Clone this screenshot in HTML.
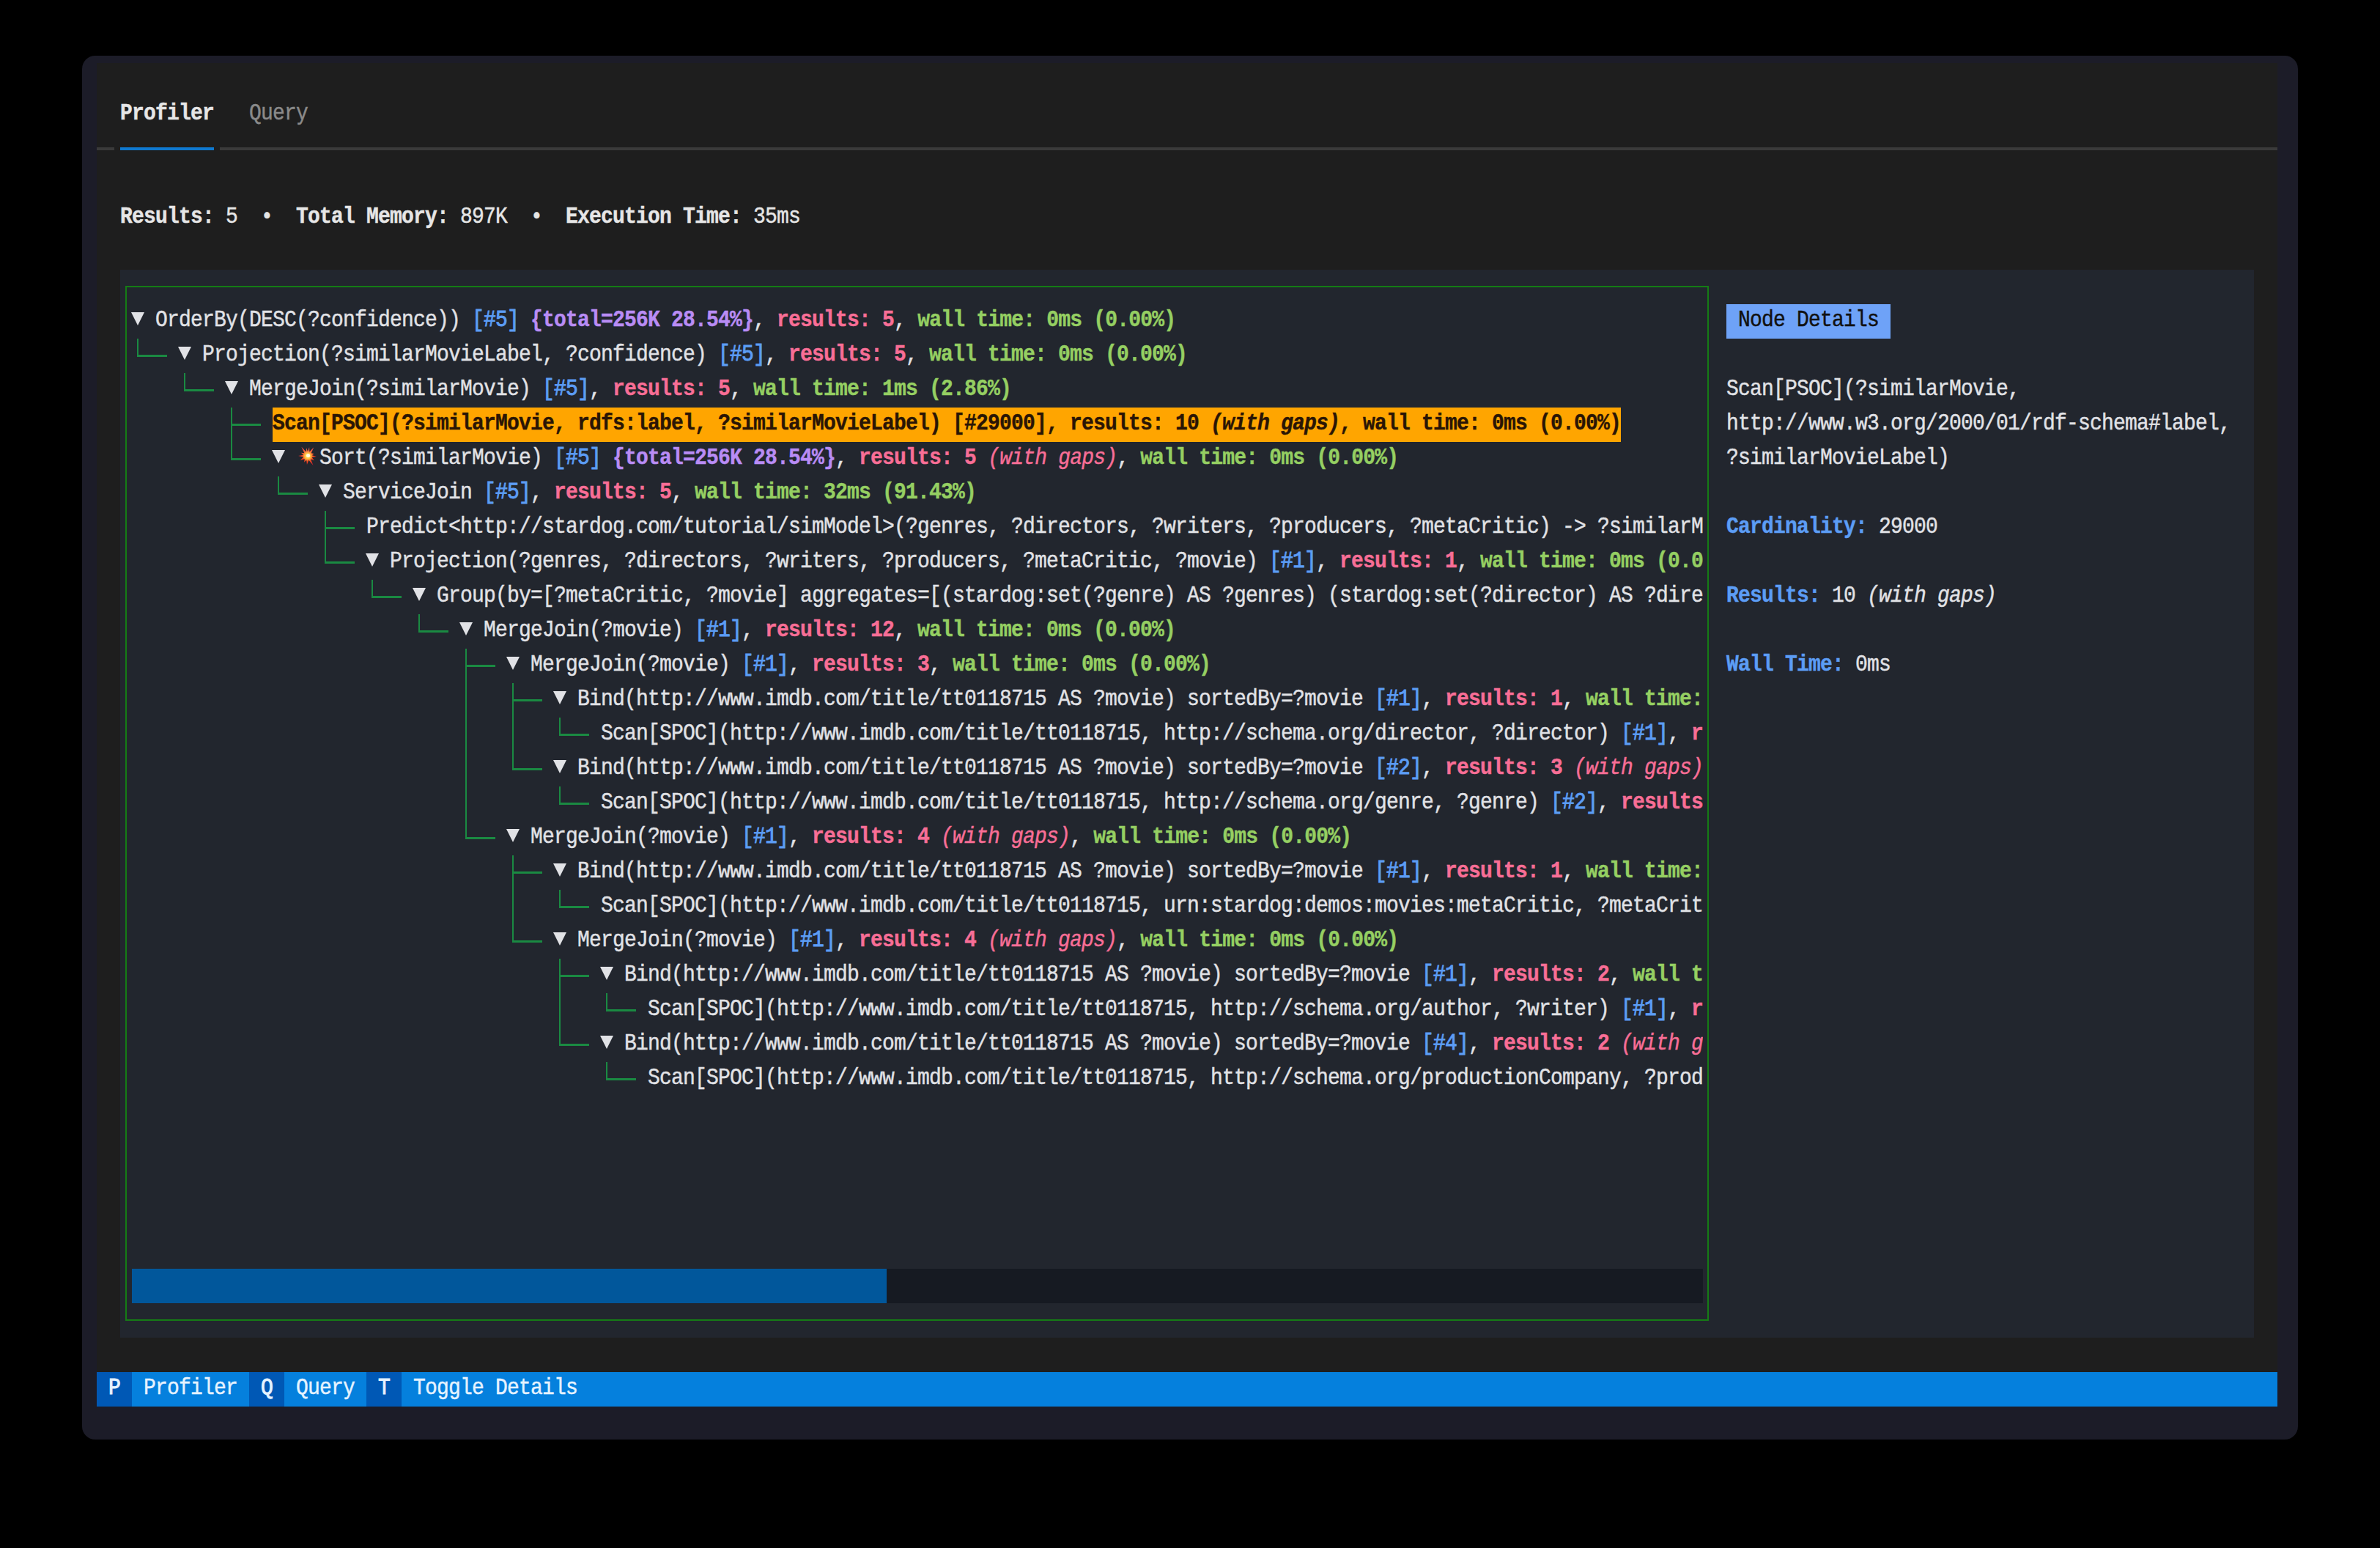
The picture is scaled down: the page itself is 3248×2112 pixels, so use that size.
<!DOCTYPE html>
<html><head><meta charset="utf-8"><title>Profiler</title><style>
html,body{margin:0;padding:0;background:#000000;}
body{width:3248px;height:2112px;position:relative;overflow:hidden;}
.t{position:absolute;height:47.0px;line-height:47.0px;white-space:pre;font-family:"Liberation Mono",monospace;font-size:28.0px;letter-spacing:-0.8027px;color:#e1e2e6;transform:scaleY(1.12);transform-origin:0 30.95px;-webkit-text-stroke:0.4px currentColor;}
.w{color:#e1e2e6;}
.b{color:#5c9df5;-webkit-text-stroke:0.8px currentColor;}
.p{color:#b98cf5;font-weight:bold;}
.r{color:#f86e96;font-weight:bold;}
.ri{color:#f86e96;font-style:italic;}
.g{color:#95cf62;font-weight:bold;}
.h{color:#2a1505;font-weight:bold;}
.hi{color:#2a1505;font-weight:bold;font-style:italic;}
.tabA{color:#e6e6e6;font-weight:bold;}
.tabI{color:#8a8a8a;}
.sb{color:#e6e6e6;font-weight:bold;}
.sw{color:#e6e6e6;}
.nd{color:#111111;}
.dw{color:#e1e2e6;}
.dwi{color:#e1e2e6;font-style:italic;}
.db{color:#5c9df5;font-weight:bold;}
.fk{color:#e6f3ff;-webkit-text-stroke:0.9px currentColor;}
.ft{color:#e6f3ff;}
</style></head><body>
<div style="position:absolute;left:112.00px;top:76.00px;width:3024.00px;height:1888.00px;background:#1c1c28;border-radius:18px;"></div>
<div style="position:absolute;left:132.00px;top:86.00px;width:2976.00px;height:1833.00px;background:#1e1e1e;"></div>
<div class="t" style="left:164.00px;top:132.00px;"><span class="tabA">Profiler</span></div>
<div class="t" style="left:340.00px;top:132.00px;"><span class="tabI">Query</span></div>
<div style="position:absolute;left:132.00px;top:201.00px;width:24.00px;height:4.00px;background:#3a3a3a;"></div>
<div style="position:absolute;left:164.00px;top:201.00px;width:128.00px;height:4.00px;background:#0f79d0;"></div>
<div style="position:absolute;left:300.00px;top:201.00px;width:2808.00px;height:4.00px;background:#3a3a3a;"></div>
<div class="t" style="left:164.00px;top:273.00px;"><span class="sb">Results:</span><span class="sw"> 5  •  </span><span class="sb">Total Memory:</span><span class="sw"> 897K  •  </span><span class="sb">Execution Time:</span><span class="sw"> 35ms</span></div>
<div style="position:absolute;left:164.00px;top:368.00px;width:2912.00px;height:1457.00px;background:#22262e;"></div>
<div style="position:absolute;left:170.75px;top:390.25px;width:2157.50px;height:1407.50px;border:2.5px solid #157c15;"></div>
<div style="position:absolute;left:186.70px;top:462.00px;width:2.60px;height:24.75px;background:#1a8a42;"></div>
<div style="position:absolute;left:186.70px;top:484.25px;width:41.30px;height:2.50px;background:#1a8a42;"></div>
<div style="position:absolute;left:250.70px;top:509.00px;width:2.60px;height:24.75px;background:#1a8a42;"></div>
<div style="position:absolute;left:250.70px;top:531.25px;width:41.30px;height:2.50px;background:#1a8a42;"></div>
<div style="position:absolute;left:314.70px;top:556.00px;width:2.60px;height:47.00px;background:#1a8a42;"></div>
<div style="position:absolute;left:314.70px;top:578.25px;width:41.30px;height:2.50px;background:#1a8a42;"></div>
<div style="position:absolute;left:314.70px;top:603.00px;width:2.60px;height:24.75px;background:#1a8a42;"></div>
<div style="position:absolute;left:314.70px;top:625.25px;width:41.30px;height:2.50px;background:#1a8a42;"></div>
<div style="position:absolute;left:378.70px;top:650.00px;width:2.60px;height:24.75px;background:#1a8a42;"></div>
<div style="position:absolute;left:378.70px;top:672.25px;width:41.30px;height:2.50px;background:#1a8a42;"></div>
<div style="position:absolute;left:442.70px;top:697.00px;width:2.60px;height:47.00px;background:#1a8a42;"></div>
<div style="position:absolute;left:442.70px;top:719.25px;width:41.30px;height:2.50px;background:#1a8a42;"></div>
<div style="position:absolute;left:442.70px;top:744.00px;width:2.60px;height:24.75px;background:#1a8a42;"></div>
<div style="position:absolute;left:442.70px;top:766.25px;width:41.30px;height:2.50px;background:#1a8a42;"></div>
<div style="position:absolute;left:506.70px;top:791.00px;width:2.60px;height:24.75px;background:#1a8a42;"></div>
<div style="position:absolute;left:506.70px;top:813.25px;width:41.30px;height:2.50px;background:#1a8a42;"></div>
<div style="position:absolute;left:570.70px;top:838.00px;width:2.60px;height:24.75px;background:#1a8a42;"></div>
<div style="position:absolute;left:570.70px;top:860.25px;width:41.30px;height:2.50px;background:#1a8a42;"></div>
<div style="position:absolute;left:634.70px;top:885.00px;width:2.60px;height:47.00px;background:#1a8a42;"></div>
<div style="position:absolute;left:634.70px;top:907.25px;width:41.30px;height:2.50px;background:#1a8a42;"></div>
<div style="position:absolute;left:634.70px;top:932.00px;width:2.60px;height:47.00px;background:#1a8a42;"></div>
<div style="position:absolute;left:698.70px;top:932.00px;width:2.60px;height:47.00px;background:#1a8a42;"></div>
<div style="position:absolute;left:698.70px;top:954.25px;width:41.30px;height:2.50px;background:#1a8a42;"></div>
<div style="position:absolute;left:634.70px;top:979.00px;width:2.60px;height:47.00px;background:#1a8a42;"></div>
<div style="position:absolute;left:698.70px;top:979.00px;width:2.60px;height:47.00px;background:#1a8a42;"></div>
<div style="position:absolute;left:762.70px;top:979.00px;width:2.60px;height:24.75px;background:#1a8a42;"></div>
<div style="position:absolute;left:762.70px;top:1001.25px;width:41.30px;height:2.50px;background:#1a8a42;"></div>
<div style="position:absolute;left:634.70px;top:1026.00px;width:2.60px;height:47.00px;background:#1a8a42;"></div>
<div style="position:absolute;left:698.70px;top:1026.00px;width:2.60px;height:24.75px;background:#1a8a42;"></div>
<div style="position:absolute;left:698.70px;top:1048.25px;width:41.30px;height:2.50px;background:#1a8a42;"></div>
<div style="position:absolute;left:634.70px;top:1073.00px;width:2.60px;height:47.00px;background:#1a8a42;"></div>
<div style="position:absolute;left:762.70px;top:1073.00px;width:2.60px;height:24.75px;background:#1a8a42;"></div>
<div style="position:absolute;left:762.70px;top:1095.25px;width:41.30px;height:2.50px;background:#1a8a42;"></div>
<div style="position:absolute;left:634.70px;top:1120.00px;width:2.60px;height:24.75px;background:#1a8a42;"></div>
<div style="position:absolute;left:634.70px;top:1142.25px;width:41.30px;height:2.50px;background:#1a8a42;"></div>
<div style="position:absolute;left:698.70px;top:1167.00px;width:2.60px;height:47.00px;background:#1a8a42;"></div>
<div style="position:absolute;left:698.70px;top:1189.25px;width:41.30px;height:2.50px;background:#1a8a42;"></div>
<div style="position:absolute;left:698.70px;top:1214.00px;width:2.60px;height:47.00px;background:#1a8a42;"></div>
<div style="position:absolute;left:762.70px;top:1214.00px;width:2.60px;height:24.75px;background:#1a8a42;"></div>
<div style="position:absolute;left:762.70px;top:1236.25px;width:41.30px;height:2.50px;background:#1a8a42;"></div>
<div style="position:absolute;left:698.70px;top:1261.00px;width:2.60px;height:24.75px;background:#1a8a42;"></div>
<div style="position:absolute;left:698.70px;top:1283.25px;width:41.30px;height:2.50px;background:#1a8a42;"></div>
<div style="position:absolute;left:762.70px;top:1308.00px;width:2.60px;height:47.00px;background:#1a8a42;"></div>
<div style="position:absolute;left:762.70px;top:1330.25px;width:41.30px;height:2.50px;background:#1a8a42;"></div>
<div style="position:absolute;left:762.70px;top:1355.00px;width:2.60px;height:47.00px;background:#1a8a42;"></div>
<div style="position:absolute;left:826.70px;top:1355.00px;width:2.60px;height:24.75px;background:#1a8a42;"></div>
<div style="position:absolute;left:826.70px;top:1377.25px;width:41.30px;height:2.50px;background:#1a8a42;"></div>
<div style="position:absolute;left:762.70px;top:1402.00px;width:2.60px;height:24.75px;background:#1a8a42;"></div>
<div style="position:absolute;left:762.70px;top:1424.25px;width:41.30px;height:2.50px;background:#1a8a42;"></div>
<div style="position:absolute;left:826.70px;top:1449.00px;width:2.60px;height:24.75px;background:#1a8a42;"></div>
<div style="position:absolute;left:826.70px;top:1471.25px;width:41.30px;height:2.50px;background:#1a8a42;"></div>
<div style="position:absolute;left:179.00px;top:426.00px;width:0;height:0;border-left:9px solid transparent;border-right:9px solid transparent;border-top:18px solid #e1e2e6;"></div>
<div class="t" style="left:212.00px;top:414.00px;width:2112.00px;overflow:hidden;"><span class="w">OrderBy(DESC(?confidence))</span><span class="w"> </span><span class="b">[#5]</span><span class="w"> </span><span class="p">{total=256K 28.54%}</span><span class="w">, </span><span class="r">results: 5</span><span class="w">, </span><span class="g">wall time: 0ms (0.00%)</span></div>
<div style="position:absolute;left:243.00px;top:473.00px;width:0;height:0;border-left:9px solid transparent;border-right:9px solid transparent;border-top:18px solid #e1e2e6;"></div>
<div class="t" style="left:276.00px;top:461.00px;width:2048.00px;overflow:hidden;"><span class="w">Projection(?similarMovieLabel, ?confidence)</span><span class="w"> </span><span class="b">[#5]</span><span class="w">, </span><span class="r">results: 5</span><span class="w">, </span><span class="g">wall time: 0ms (0.00%)</span></div>
<div style="position:absolute;left:307.00px;top:520.00px;width:0;height:0;border-left:9px solid transparent;border-right:9px solid transparent;border-top:18px solid #e1e2e6;"></div>
<div class="t" style="left:340.00px;top:508.00px;width:1984.00px;overflow:hidden;"><span class="w">MergeJoin(?similarMovie)</span><span class="w"> </span><span class="b">[#5]</span><span class="w">, </span><span class="r">results: 5</span><span class="w">, </span><span class="g">wall time: 1ms (2.86%)</span></div>
<div style="position:absolute;left:371.00px;top:614.00px;width:0;height:0;border-left:9px solid transparent;border-right:9px solid transparent;border-top:18px solid #e1e2e6;"></div>
<div class="t" style="left:436.00px;top:602.00px;width:1888.00px;overflow:hidden;"><span class="w">Sort(?similarMovie)</span><span class="w"> </span><span class="b">[#5]</span><span class="w"> </span><span class="p">{total=256K 28.54%}</span><span class="w">, </span><span class="r">results: 5</span><span class="r"> </span><span class="ri">(with gaps)</span><span class="w">, </span><span class="g">wall time: 0ms (0.00%)</span></div>
<div style="position:absolute;left:435.00px;top:661.00px;width:0;height:0;border-left:9px solid transparent;border-right:9px solid transparent;border-top:18px solid #e1e2e6;"></div>
<div class="t" style="left:468.00px;top:649.00px;width:1856.00px;overflow:hidden;"><span class="w">ServiceJoin</span><span class="w"> </span><span class="b">[#5]</span><span class="w">, </span><span class="r">results: 5</span><span class="w">, </span><span class="g">wall time: 32ms (91.43%)</span></div>
<div class="t" style="left:500.00px;top:696.00px;width:1824.00px;overflow:hidden;"><span class="w">Predict&lt;http://stardog.com/tutorial/simModel&gt;(?genres, ?directors, ?writers, ?producers, ?metaCritic) -&gt; ?similarMovie</span></div>
<div style="position:absolute;left:499.00px;top:755.00px;width:0;height:0;border-left:9px solid transparent;border-right:9px solid transparent;border-top:18px solid #e1e2e6;"></div>
<div class="t" style="left:532.00px;top:743.00px;width:1792.00px;overflow:hidden;"><span class="w">Projection(?genres, ?directors, ?writers, ?producers, ?metaCritic, ?movie)</span><span class="w"> </span><span class="b">[#1]</span><span class="w">, </span><span class="r">results: 1</span><span class="w">, </span><span class="g">wall time: 0ms (0.00%)</span></div>
<div style="position:absolute;left:563.00px;top:802.00px;width:0;height:0;border-left:9px solid transparent;border-right:9px solid transparent;border-top:18px solid #e1e2e6;"></div>
<div class="t" style="left:596.00px;top:790.00px;width:1728.00px;overflow:hidden;"><span class="w">Group(by=[?metaCritic, ?movie] aggregates=[(stardog:set(?genre) AS ?genres) (stardog:set(?director) AS ?directors)</span></div>
<div style="position:absolute;left:627.00px;top:849.00px;width:0;height:0;border-left:9px solid transparent;border-right:9px solid transparent;border-top:18px solid #e1e2e6;"></div>
<div class="t" style="left:660.00px;top:837.00px;width:1664.00px;overflow:hidden;"><span class="w">MergeJoin(?movie)</span><span class="w"> </span><span class="b">[#1]</span><span class="w">, </span><span class="r">results: 12</span><span class="w">, </span><span class="g">wall time: 0ms (0.00%)</span></div>
<div style="position:absolute;left:691.00px;top:896.00px;width:0;height:0;border-left:9px solid transparent;border-right:9px solid transparent;border-top:18px solid #e1e2e6;"></div>
<div class="t" style="left:724.00px;top:884.00px;width:1600.00px;overflow:hidden;"><span class="w">MergeJoin(?movie)</span><span class="w"> </span><span class="b">[#1]</span><span class="w">, </span><span class="r">results: 3</span><span class="w">, </span><span class="g">wall time: 0ms (0.00%)</span></div>
<div style="position:absolute;left:755.00px;top:943.00px;width:0;height:0;border-left:9px solid transparent;border-right:9px solid transparent;border-top:18px solid #e1e2e6;"></div>
<div class="t" style="left:788.00px;top:931.00px;width:1536.00px;overflow:hidden;"><span class="w">Bind(http://www.imdb.com/title/tt0118715 AS ?movie) sortedBy=?movie</span><span class="w"> </span><span class="b">[#1]</span><span class="w">, </span><span class="r">results: 1</span><span class="w">, </span><span class="g">wall time: 0ms (0.00%)</span></div>
<div class="t" style="left:820.00px;top:978.00px;width:1504.00px;overflow:hidden;"><span class="w">Scan[SPOC](http://www.imdb.com/title/tt0118715, http://schema.org/director, ?director)</span><span class="w"> </span><span class="b">[#1]</span><span class="w">, </span><span class="r">results: 1</span><span class="w">, </span><span class="g">wall time: 0ms (0.00%)</span></div>
<div style="position:absolute;left:755.00px;top:1037.00px;width:0;height:0;border-left:9px solid transparent;border-right:9px solid transparent;border-top:18px solid #e1e2e6;"></div>
<div class="t" style="left:788.00px;top:1025.00px;width:1536.00px;overflow:hidden;"><span class="w">Bind(http://www.imdb.com/title/tt0118715 AS ?movie) sortedBy=?movie</span><span class="w"> </span><span class="b">[#2]</span><span class="w">, </span><span class="r">results: 3</span><span class="r"> </span><span class="ri">(with gaps)</span><span class="w">, </span><span class="g">wall time: 0ms (0.00%)</span></div>
<div class="t" style="left:820.00px;top:1072.00px;width:1504.00px;overflow:hidden;"><span class="w">Scan[SPOC](http://www.imdb.com/title/tt0118715, http://schema.org/genre, ?genre)</span><span class="w"> </span><span class="b">[#2]</span><span class="w">, </span><span class="r">results: 3</span><span class="r"> </span><span class="ri">(with gaps)</span><span class="w">, </span><span class="g">wall time: 0ms (0.00%)</span></div>
<div style="position:absolute;left:691.00px;top:1131.00px;width:0;height:0;border-left:9px solid transparent;border-right:9px solid transparent;border-top:18px solid #e1e2e6;"></div>
<div class="t" style="left:724.00px;top:1119.00px;width:1600.00px;overflow:hidden;"><span class="w">MergeJoin(?movie)</span><span class="w"> </span><span class="b">[#1]</span><span class="w">, </span><span class="r">results: 4</span><span class="r"> </span><span class="ri">(with gaps)</span><span class="w">, </span><span class="g">wall time: 0ms (0.00%)</span></div>
<div style="position:absolute;left:755.00px;top:1178.00px;width:0;height:0;border-left:9px solid transparent;border-right:9px solid transparent;border-top:18px solid #e1e2e6;"></div>
<div class="t" style="left:788.00px;top:1166.00px;width:1536.00px;overflow:hidden;"><span class="w">Bind(http://www.imdb.com/title/tt0118715 AS ?movie) sortedBy=?movie</span><span class="w"> </span><span class="b">[#1]</span><span class="w">, </span><span class="r">results: 1</span><span class="w">, </span><span class="g">wall time: 0ms (0.00%)</span></div>
<div class="t" style="left:820.00px;top:1213.00px;width:1504.00px;overflow:hidden;"><span class="w">Scan[SPOC](http://www.imdb.com/title/tt0118715, urn:stardog:demos:movies:metaCritic, ?metaCritic)</span><span class="w"> </span><span class="b">[#1]</span><span class="w">, </span><span class="r">results: 1</span><span class="w">, </span><span class="g">wall time: 0ms (0.00%)</span></div>
<div style="position:absolute;left:755.00px;top:1272.00px;width:0;height:0;border-left:9px solid transparent;border-right:9px solid transparent;border-top:18px solid #e1e2e6;"></div>
<div class="t" style="left:788.00px;top:1260.00px;width:1536.00px;overflow:hidden;"><span class="w">MergeJoin(?movie)</span><span class="w"> </span><span class="b">[#1]</span><span class="w">, </span><span class="r">results: 4</span><span class="r"> </span><span class="ri">(with gaps)</span><span class="w">, </span><span class="g">wall time: 0ms (0.00%)</span></div>
<div style="position:absolute;left:819.00px;top:1319.00px;width:0;height:0;border-left:9px solid transparent;border-right:9px solid transparent;border-top:18px solid #e1e2e6;"></div>
<div class="t" style="left:852.00px;top:1307.00px;width:1472.00px;overflow:hidden;"><span class="w">Bind(http://www.imdb.com/title/tt0118715 AS ?movie) sortedBy=?movie</span><span class="w"> </span><span class="b">[#1]</span><span class="w">, </span><span class="r">results: 2</span><span class="w">, </span><span class="g">wall time: 0ms (0.00%)</span></div>
<div class="t" style="left:884.00px;top:1354.00px;width:1440.00px;overflow:hidden;"><span class="w">Scan[SPOC](http://www.imdb.com/title/tt0118715, http://schema.org/author, ?writer)</span><span class="w"> </span><span class="b">[#1]</span><span class="w">, </span><span class="r">results: 2</span><span class="w">, </span><span class="g">wall time: 0ms (0.00%)</span></div>
<div style="position:absolute;left:819.00px;top:1413.00px;width:0;height:0;border-left:9px solid transparent;border-right:9px solid transparent;border-top:18px solid #e1e2e6;"></div>
<div class="t" style="left:852.00px;top:1401.00px;width:1472.00px;overflow:hidden;"><span class="w">Bind(http://www.imdb.com/title/tt0118715 AS ?movie) sortedBy=?movie</span><span class="w"> </span><span class="b">[#4]</span><span class="w">, </span><span class="r">results: 2</span><span class="r"> </span><span class="ri">(with gaps)</span><span class="w">, </span><span class="g">wall time: 0ms (0.00%)</span></div>
<div class="t" style="left:884.00px;top:1448.00px;width:1440.00px;overflow:hidden;"><span class="w">Scan[SPOC](http://www.imdb.com/title/tt0118715, http://schema.org/productionCompany, ?producer)</span><span class="w"> </span><span class="b">[#4]</span><span class="w">, </span><span class="r">results: 2</span><span class="r"> </span><span class="ri">(with gaps)</span><span class="w">, </span><span class="g">wall time: 0ms (0.00%)</span></div>
<div style="position:absolute;left:372.00px;top:556.00px;width:1840.00px;height:47.00px;background:#ffa500;"></div>
<div class="t" style="left:372.00px;top:555.00px;"><span class="h">Scan[PSOC](?similarMovie, rdfs:label, ?similarMovieLabel) [#29000], results: 10 </span><span class="hi">(with gaps)</span><span class="h">, wall time: 0ms (0.00%)</span></div>
<svg style="position:absolute;left:403.5px;top:605.5px" width="32" height="32" viewBox="-16 -16 32 32">
<defs><radialGradient id="bg1" cx="0" cy="0" r="15" gradientUnits="userSpaceOnUse"><stop offset="0" stop-color="#fff6c0"/><stop offset="0.25" stop-color="#ffc040"/><stop offset="0.5" stop-color="#f04a20"/><stop offset="1" stop-color="#d01030"/></radialGradient>
<linearGradient id="bg2" x1="0" y1="-15" x2="0" y2="15" gradientUnits="userSpaceOnUse"><stop offset="0" stop-color="#ffb090" stop-opacity="0.55"/><stop offset="0.5" stop-color="#ffb090" stop-opacity="0"/></linearGradient></defs>
<polygon fill="url(#bg1)" points="-9.06,-4.23 -4.60,-3.86 -8.60,-12.29 -2.30,-5.54 -1.91,-10.83 0.00,-6.00 2.08,-11.82 2.30,-5.54 8.03,-11.47 4.76,-3.65 8.46,-3.08 5.95,-0.78 11.95,1.05 5.64,2.05 9.01,6.31 4.05,4.42 7.50,12.99 1.30,5.86 -1.05,11.95 -1.80,5.72 -5.00,8.66 -4.24,4.24 -10.39,6.00 -5.80,1.55 -13.00,0.00 -5.86,-1.30"/>
<polygon fill="url(#bg2)" points="-9.06,-4.23 -4.60,-3.86 -8.60,-12.29 -2.30,-5.54 -1.91,-10.83 0.00,-6.00 2.08,-11.82 2.30,-5.54 8.03,-11.47 4.76,-3.65 8.46,-3.08 5.95,-0.78 11.95,1.05 5.64,2.05 9.01,6.31 4.05,4.42 7.50,12.99 1.30,5.86 -1.05,11.95 -1.80,5.72 -5.00,8.66 -4.24,4.24 -10.39,6.00 -5.80,1.55 -13.00,0.00 -5.86,-1.30"/>
<polygon fill="#ffd040" points="-3.63,-1.69 -1.84,-1.54 -3.44,-4.91 -0.92,-2.22 -0.76,-4.33 0.00,-2.40 0.83,-4.73 0.92,-2.22 3.21,-4.59 1.90,-1.46 3.38,-1.23 2.38,-0.31 4.78,0.42 2.26,0.82 3.60,2.52 1.62,1.77 3.00,5.20 0.52,2.34 -0.42,4.78 -0.72,2.29 -2.00,3.46 -1.70,1.70 -4.16,2.40 -2.32,0.62 -5.20,0.00 -2.34,-0.52"/>
<circle cx="0.5" cy="-0.5" r="2.6" fill="#fffbe0"/></svg>
<div style="position:absolute;left:180.00px;top:1731.00px;width:1030.00px;height:47.00px;background:#01579b;"></div>
<div style="position:absolute;left:1210.00px;top:1731.00px;width:1114.00px;height:47.00px;background:#161a22;"></div>
<div style="position:absolute;left:2356.00px;top:415.00px;width:224.00px;height:47.00px;background:#6ea2f7;"></div>
<div class="t" style="left:2372.00px;top:414.00px;"><span class="nd">Node Details</span></div>
<div class="t" style="left:2356.00px;top:508.00px;"><span class="dw">Scan[PSOC](?similarMovie,</span></div>
<div class="t" style="left:2356.00px;top:555.00px;"><span class="dw">http://www.w3.org/2000/01/rdf-schema#label,</span></div>
<div class="t" style="left:2356.00px;top:602.00px;"><span class="dw">?similarMovieLabel)</span></div>
<div class="t" style="left:2356.00px;top:696.00px;"><span class="db">Cardinality:</span><span class="dw"> 29000</span></div>
<div class="t" style="left:2356.00px;top:790.00px;"><span class="db">Results:</span><span class="dw"> 10 </span><span class="dwi">(with gaps)</span></div>
<div class="t" style="left:2356.00px;top:884.00px;"><span class="db">Wall Time:</span><span class="dw"> 0ms</span></div>
<div style="position:absolute;left:132.00px;top:1872.00px;width:2976.00px;height:47.00px;background:#0580dd;"></div>
<div style="position:absolute;left:132.00px;top:1872.00px;width:48.00px;height:47.00px;background:#0058b5;"></div>
<div style="position:absolute;left:340.00px;top:1872.00px;width:48.00px;height:47.00px;background:#0058b5;"></div>
<div style="position:absolute;left:500.00px;top:1872.00px;width:48.00px;height:47.00px;background:#0058b5;"></div>
<div class="t" style="left:148.00px;top:1871.00px;"><span class="fk">P</span></div>
<div class="t" style="left:196.00px;top:1871.00px;"><span class="ft">Profiler</span></div>
<div class="t" style="left:356.00px;top:1871.00px;"><span class="fk">Q</span></div>
<div class="t" style="left:404.00px;top:1871.00px;"><span class="ft">Query</span></div>
<div class="t" style="left:516.00px;top:1871.00px;"><span class="fk">T</span></div>
<div class="t" style="left:564.00px;top:1871.00px;"><span class="ft">Toggle Details</span></div>
</body></html>
